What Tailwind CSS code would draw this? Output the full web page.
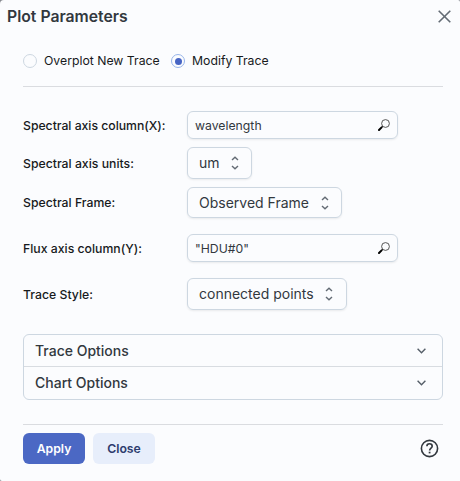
<!DOCTYPE html>
<html lang="en">
<head>
<meta charset="utf-8">
<title>Plot Parameters</title>
<script src="https://cdn.jsdelivr.net/npm/@tailwindcss/browser@4"></script>
</head>
<body class="w-[460px] h-[481px] overflow-hidden bg-[#85888e] font-['Inter',sans-serif] text-[#32383e]">
<main class="w-full h-full rounded-tl-[4px] rounded-tr-[2px] rounded-bl-[2px] bg-[#fbfcfe] flex flex-col">
  <header class="h-8 shrink-0 flex items-center justify-between pl-[7px] pr-[9px]">
    <h1 class="pt-[2px] text-[15.75px] leading-6 font-semibold whitespace-nowrap">Plot Parameters</h1>
    <svg class="w-[13px] h-[13px]" viewBox="0 0 13 13" fill="none" stroke="#636b74" stroke-width="1.6"><path d="M.7.7 12.3 12.3M12.3.7.7 12.3"/></svg>
  </header>

  <div class="flex flex-col px-[23px] pr-[17px]">
    <div class="h-[54px] pt-[21px] flex text-[12.25px] leading-4 text-[#171a1c]">
      <label class="flex w-[148px] gap-[7px]"><span class="w-[14px] h-[14px] mt-px rounded-full border border-[#cdd7e1]"></span><span class="whitespace-nowrap">Overplot New Trace</span></label>
      <label class="flex gap-[7px]"><span class="w-[14px] h-[14px] mt-px rounded-full border border-[#97b5ea] flex items-center justify-center"><span class="w-[7px] h-[7px] rounded-full bg-[#4664c4]"></span></span><span class="whitespace-nowrap">Modify Trace</span></label>
    </div>
    <hr class="h-px border-0 bg-[#dadce0]">

    <div class="grid grid-cols-[164px_1fr] items-center pt-6 text-[12.25px] font-medium text-[#171a1c]">
      <span class="mb-2 pt-[3px] tracking-[-0.03px]">Spectral axis column(X):</span>
      <div class="mb-2 w-[211px] h-7 rounded-md border border-[#cdd7e1] shadow-[0_1px_2px_rgba(21,21,21,0.08)] flex items-center justify-between pl-[7px] pr-[7px] font-normal text-[#32383e]"><span class="pt-[3px]">wavelength</span>
        <svg class="w-[12px] h-[12px]" viewBox="0 0 12 12" fill="none"><circle cx="7.5" cy="4.5" r="3.9" stroke="#444" stroke-width=".9"/><path d="M4.8 7.2 3.7 8.3" stroke="#222" stroke-width="1"/><path d="M3.6 8.4 1 11" stroke="#000" stroke-width="2" stroke-linecap="round"/></svg></div>

      <span class="mb-2 pt-[3px]">Spectral axis units:</span>
      <button class="mb-2 w-[65px] h-8 rounded-md border border-[#cdd7e1] shadow-[0_1px_2px_rgba(21,21,21,0.08)] flex items-center justify-between pl-[11px] pr-3 text-[14px] font-normal text-[#32383e]"><span class="pb-px">um</span>
        <svg class="w-2 h-[14px]" viewBox="0 0 8 14" fill="none" stroke="#636b74" stroke-width="1.4"><path d="M1 4 4 1.2 7 4M1 10 4 12.8 7 10"/></svg></button>

      <span class="mb-4 pt-px">Spectral Frame:</span>
      <button class="mb-4 w-[155px] h-[31px] rounded-md border border-[#cdd7e1] shadow-[0_1px_2px_rgba(21,21,21,0.08)] flex items-center justify-between pl-[11px] pr-3 text-[14px] font-normal text-[#32383e]"><span>Observed Frame</span>
        <svg class="w-2 h-[14px]" viewBox="0 0 8 14" fill="none" stroke="#636b74" stroke-width="1.4"><path d="M1 4 4 1.2 7 4M1 10 4 12.8 7 10"/></svg></button>

      <span class="mb-4 pt-[3px]">Flux axis column(Y):</span>
      <div class="mb-4 w-[211px] h-7 rounded-md border border-[#cdd7e1] shadow-[0_1px_2px_rgba(21,21,21,0.08)] flex items-center justify-between pl-[7px] pr-[7px] font-normal text-[#32383e]"><span class="pt-[3px]">"HDU#0"</span>
        <svg class="w-[12px] h-[12px]" viewBox="0 0 12 12" fill="none"><circle cx="7.5" cy="4.5" r="3.9" stroke="#444" stroke-width=".9"/><path d="M4.8 7.2 3.7 8.3" stroke="#222" stroke-width="1"/><path d="M3.6 8.4 1 11" stroke="#000" stroke-width="2" stroke-linecap="round"/></svg></div>

      <span class="pt-[2px]">Trace Style:</span>
      <button class="w-[160px] h-8 rounded-md border border-[#cdd7e1] shadow-[0_1px_2px_rgba(21,21,21,0.08)] flex items-center justify-between pl-[11px] pr-[13px] text-[14px] font-normal text-[#32383e]"><span class="pb-px">connected points</span>
        <svg class="w-2 h-[14px]" viewBox="0 0 8 14" fill="none" stroke="#636b74" stroke-width="1.4"><path d="M1 4 4 1.2 7 4M1 10 4 12.8 7 10"/></svg></button>
    </div>

    <section class="mt-6 h-[66px] rounded-md border border-[#cdd7e1] text-[14px] font-medium">
      <div class="h-8 border-b border-[#d8dce1] flex items-center justify-between pl-[11px] pr-4"><span>Trace Options</span>
        <svg class="w-[9px] h-[6px]" viewBox="0 0 9 6" fill="none" stroke="#555e68" stroke-width="1.4"><path d="M.6.8 4.5 4.7 8.4.8"/></svg></div>
      <div class="h-8 flex items-center justify-between pl-[11px] pr-4"><span class="pb-px">Chart Options</span>
        <svg class="w-[9px] h-[6px]" viewBox="0 0 9 6" fill="none" stroke="#555e68" stroke-width="1.4"><path d="M.6.8 4.5 4.7 8.4.8"/></svg></div>
    </section>

    <hr class="mt-6 h-px border-0 bg-[#dadce0]">
    <footer class="pt-2 flex items-center gap-2 text-[12.25px] font-semibold">
      <button class="w-[62px] h-[31px] pt-[2px] rounded-md bg-[#4b68c4] text-white">Apply</button>
      <button class="w-[62px] h-[31px] pt-[2px] rounded-md bg-[#e7eefb] text-[#2d3c6e]">Close</button>
      <svg class="ml-auto mr-1 w-[19px] h-[19px]" viewBox="0 0 19 19" fill="none" stroke="#32383e" stroke-width="1.6"><circle cx="9.5" cy="9.5" r="8.1"/><path d="M6.9 7.3C6.9 5.8 8 4.8 9.5 4.8S12.2 5.8 12.2 7.2C12.2 9 9.6 9.2 9.6 11.5"/><path d="M9.6 12.7V14.4" stroke-width="1.8"/></svg>
    </footer>
  </div>
</main>
</body>
</html>
